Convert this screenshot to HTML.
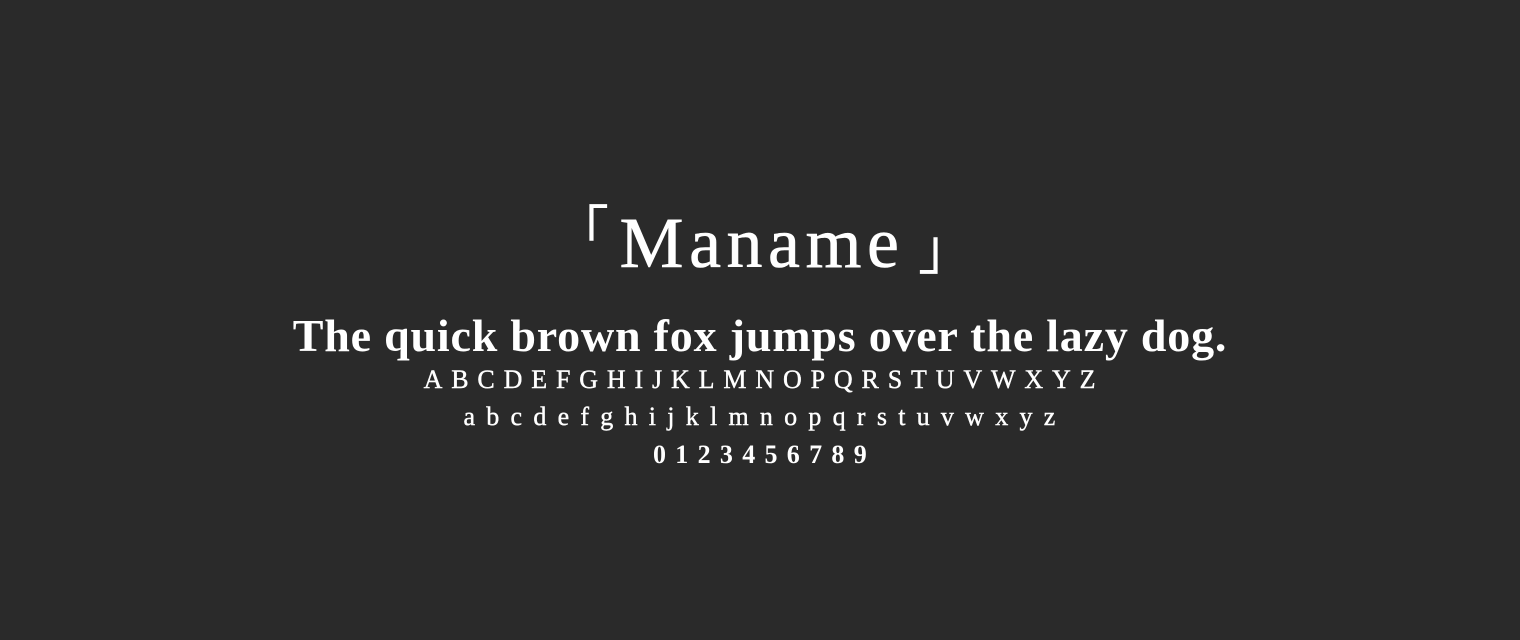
<!DOCTYPE html>
<html><head><meta charset="utf-8"><style>
html,body{margin:0;padding:0;}
body{width:1520px;height:640px;background:#2a2a2a;position:relative;overflow:hidden;color:#fff;font-family:"Liberation Serif",serif;}
.c{position:absolute;left:0;width:1520px;text-align:center;white-space:nowrap;}
.br{position:absolute;font-family:"Noto Sans CJK JP",sans-serif;font-size:56px;line-height:1;}
</style></head><body>
<div class="br" style="left:553px;top:201px;">「</div>
<div class="c" style="top:198px;font-size:72px;line-height:90px;letter-spacing:5.5px;left:2px;-webkit-text-stroke:0.6px #fff;">Maname</div>
<div class="br" style="left:918px;top:218px;">」</div>
<div class="c" style="top:308px;font-size:46px;font-weight:bold;line-height:56px;letter-spacing:0.8px;">The quick brown fox jumps over the lazy dog.</div>
<div class="c" style="top:364px;font-size:26px;line-height:32px;letter-spacing:8.85px;text-indent:8px;-webkit-text-stroke:0.4px #fff;">ABCDEFGHIJKLMNOPQRSTUVWXYZ</div>
<div class="c" style="top:401px;font-size:26px;line-height:32px;letter-spacing:11.25px;text-indent:10px;-webkit-text-stroke:0.4px #fff;">abcdefghijklmnopqrstuvwxyz</div>
<div class="c" style="top:439px;font-size:26px;font-weight:bold;line-height:32px;letter-spacing:9.3px;text-indent:9px;">0123456789</div>
</body></html>
